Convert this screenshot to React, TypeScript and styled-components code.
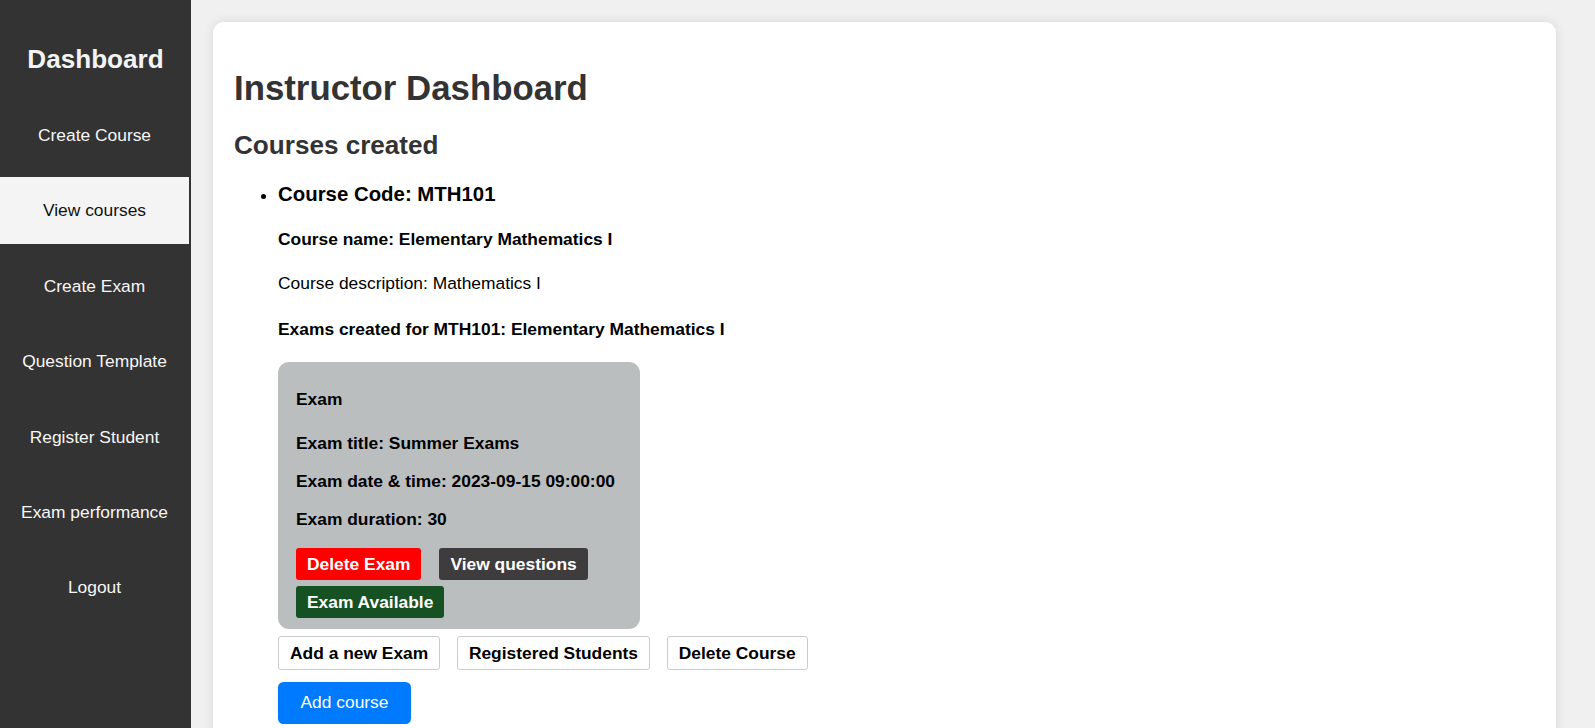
import styled, { createGlobalStyle } from "styled-components";

const GlobalStyle = createGlobalStyle`
  * {
    box-sizing: border-box;
  }
  body {
    margin: 0;
    background: #f0f0f0;
    font-family: "Liberation Sans", Arial, sans-serif;
  }
`;

const navItems = [
  "Create Course",
  "View courses",
  "Create Exam",
  "Question Template",
  "Register Student",
  "Exam performance",
  "Logout",
];

export default function App() {
  return (
    <>
      <GlobalStyle />
      <Layout>
        <Sidebar>
          <SidebarTitle>Dashboard</SidebarTitle>
          <NavList>
            {navItems.map((item) => (
              <NavItem key={item} $active={item === "View courses"}>
                {item}
              </NavItem>
            ))}
          </NavList>
        </Sidebar>

        <Main>
          <Card>
            <PageTitle>Instructor Dashboard</PageTitle>
            <SectionTitle>Courses created</SectionTitle>
            <CourseList>
              <CourseItem>
                <CourseCode>Course Code: MTH101</CourseCode>
                <Line $bold $space={23}>
                  Course name: Elementary Mathematics I
                </Line>
                <Line $space={25}>Course description: Mathematics I</Line>
                <Line $bold $space={21.5}>
                  Exams created for MTH101: Elementary Mathematics I
                </Line>

                <ExamCard>
                  <ExamLine $space={23.7}>Exam</ExamLine>
                  <ExamLine $space={17.3}>Exam title: Summer Exams</ExamLine>
                  <ExamLine $space={17}>
                    Exam date &amp; time: 2023-09-15 09:00:00
                  </ExamLine>
                  <ExamLine $space={18}>Exam duration: 30</ExamLine>
                  <ExamActions>
                    <ExamButton $bg="#ff0000">Delete Exam</ExamButton>
                    <ExamButton $bg="#3e3c3c">View questions</ExamButton>
                    <ExamButton $bg="#165124">Exam Available</ExamButton>
                  </ExamActions>
                </ExamCard>

                <CourseActions>
                  <OutlineButton>Add a new Exam</OutlineButton>
                  <OutlineButton>Registered Students</OutlineButton>
                  <OutlineButton>Delete Course</OutlineButton>
                </CourseActions>

                <PrimaryButton>Add course</PrimaryButton>
              </CourseItem>
            </CourseList>
          </Card>
        </Main>
      </Layout>
    </>
  );
}

const Layout = styled.div`
  display: flex;
  height: 100vh;
`;

const Sidebar = styled.aside`
  width: 191px;
  flex-shrink: 0;
  background: #333333;
  padding-top: 43.6px;
`;

const SidebarTitle = styled.h2`
  margin: 0 0 27px;
  font-size: 26.1px;
  font-weight: bold;
  color: #f4f4f4;
  text-align: center;
`;

const NavList = styled.ul`
  list-style: none;
  margin: 0;
  padding: 0;
`;

const NavItem = styled.li<{ $active?: boolean }>`
  margin: 0 2px 8.4px 0;
  padding: 23.5px 0 22.5px;
  text-align: center;
  font-size: 17.4px;
  color: ${(p) => (p.$active ? "#111111" : "#f6f6f6")};
  background: ${(p) => (p.$active ? "#f4f4f4" : "transparent")};
  cursor: pointer;
`;

const Main = styled.main`
  flex: 1;
  overflow-y: auto;
  padding: 22px 39px 22px 22px;
`;

const Card = styled.section`
  background: #ffffff;
  border-radius: 11px;
  box-shadow: 0 0 11px rgba(0, 0, 0, 0.1);
  padding: 46px 21px 22px;
`;

const PageTitle = styled.h1`
  margin: 0 0 22px;
  font-size: 34.8px;
  color: #333333;
`;

const SectionTitle = styled.h2`
  margin: 0 0 21.5px;
  font-size: 26.1px;
  color: #333333;
`;

const CourseList = styled.ul`
  margin: 0;
  padding-left: 44px;
`;

const CourseItem = styled.li`
  color: #000000;
  font-size: 17.4px;
`;

const CourseCode = styled.h3`
  margin: 0 0 23.5px;
  font-size: 20.4px;
`;

const Line = styled.p<{ $bold?: boolean; $space: number }>`
  margin: 0 0 ${(p) => p.$space}px;
  font-size: 17.4px;
  font-weight: ${(p) => (p.$bold ? "bold" : "normal")};
`;

const ExamCard = styled.div`
  width: 362px;
  padding: 27px 18px 11px 18px;
  background: #bbbebf;
  border-radius: 11px;
`;

const ExamLine = styled.p<{ $space: number }>`
  margin: 0 0 ${(p) => p.$space}px;
  font-size: 17.4px;
  font-weight: bold;
`;

const ExamActions = styled.div`
  display: flex;
  flex-wrap: wrap;
  gap: 6px 18px;
`;

const ExamButton = styled.button<{ $bg: string }>`
  height: 32px;
  padding: 0 11px;
  border: none;
  border-radius: 3px;
  background: ${(p) => p.$bg};
  color: #ffffff;
  font-family: inherit;
  font-size: 17.4px;
  font-weight: bold;
  cursor: pointer;
`;

const CourseActions = styled.div`
  display: flex;
  gap: 16.7px;
  margin: 7px 0 12px;
`;

const OutlineButton = styled.button`
  height: 33.4px;
  padding: 0 11px;
  border: 1px solid #cccccc;
  border-radius: 3px;
  background: #ffffff;
  color: #000000;
  font-family: inherit;
  font-size: 17.4px;
  font-weight: bold;
  cursor: pointer;
`;

const PrimaryButton = styled.button`
  display: block;
  height: 42px;
  padding: 0 22.5px;
  border: none;
  border-radius: 5.5px;
  background: #007bff;
  color: #ffffff;
  font-family: inherit;
  font-size: 17.4px;
  cursor: pointer;
`;
